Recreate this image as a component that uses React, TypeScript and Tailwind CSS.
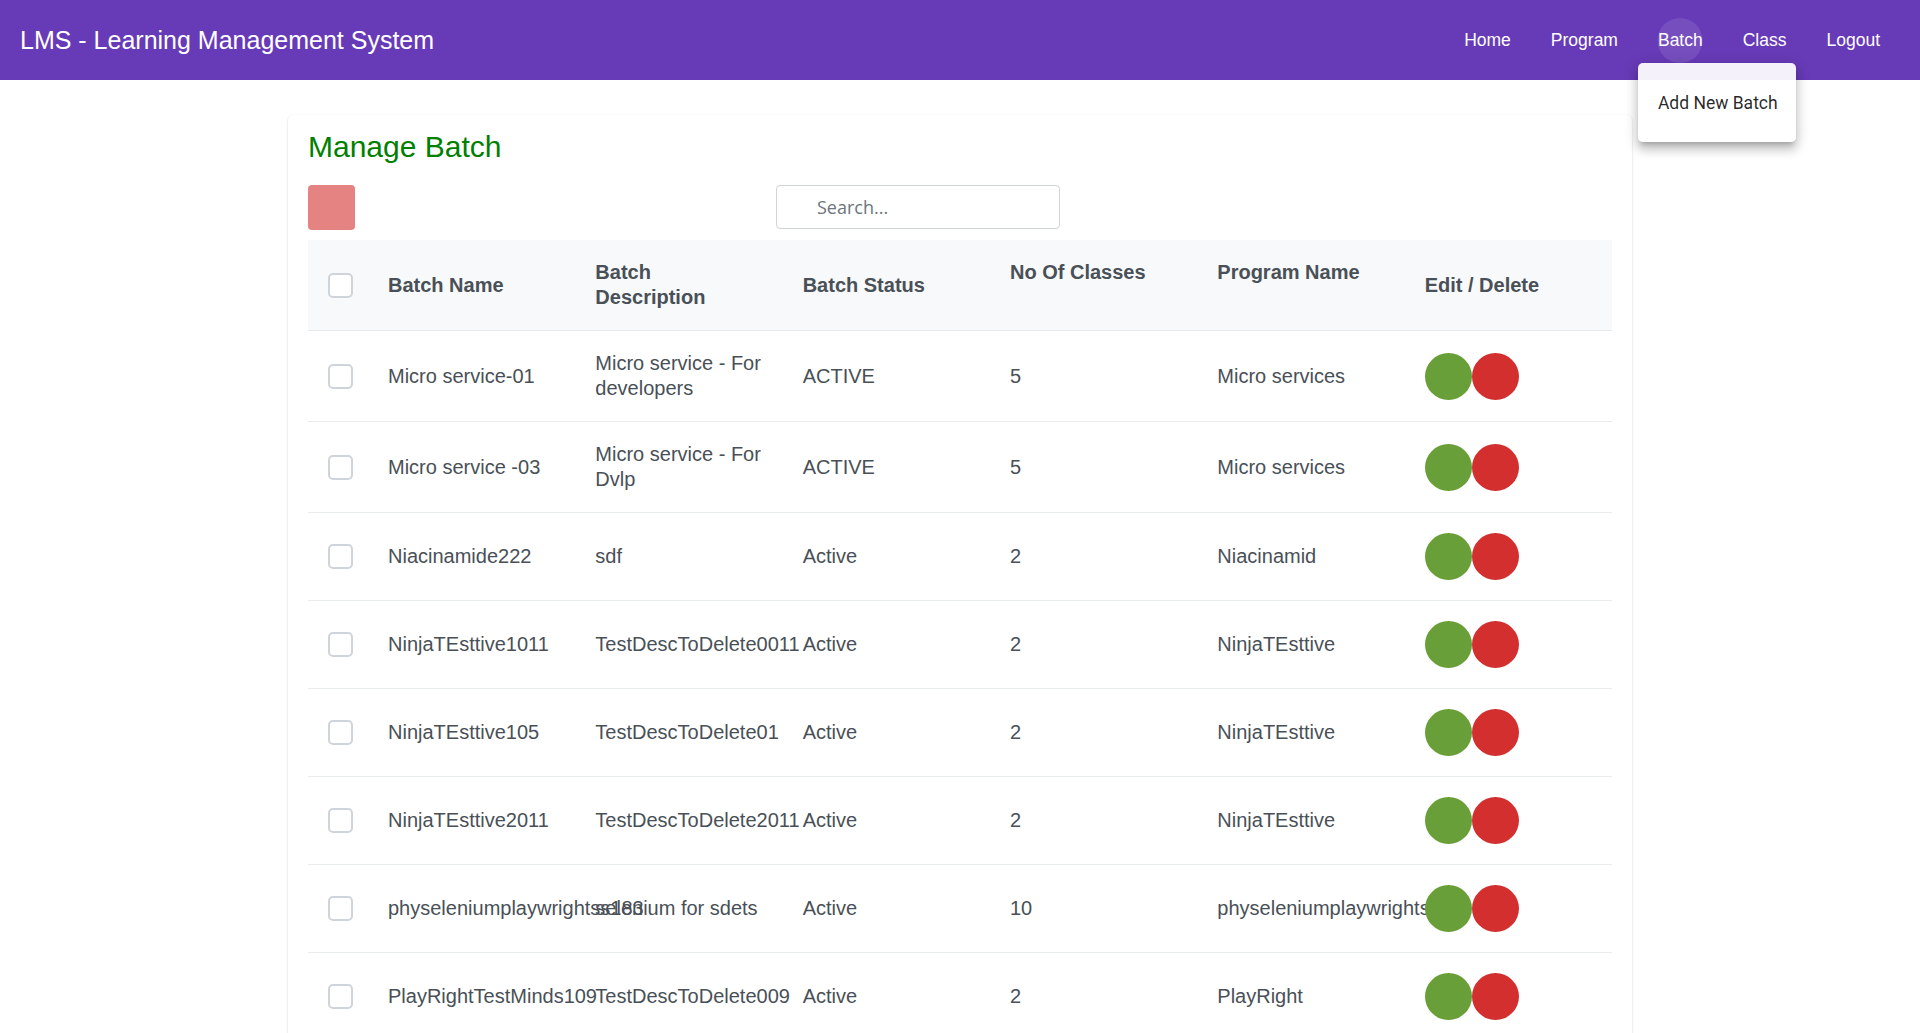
import React from 'react';

interface BatchRow {
  name: string;
  description: string;
  status: string;
  classes: number;
  program: string;
}

const batches: BatchRow[] = [
  { name: 'Micro service-01', description: 'Micro service - For developers', status: 'ACTIVE', classes: 5, program: 'Micro services' },
  { name: 'Micro service -03', description: 'Micro service - For Dvlp', status: 'ACTIVE', classes: 5, program: 'Micro services' },
  { name: 'Niacinamide222', description: 'sdf', status: 'Active', classes: 2, program: 'Niacinamid' },
  { name: 'NinjaTEsttive1011', description: 'TestDescToDelete0011', status: 'Active', classes: 2, program: 'NinjaTEsttive' },
  { name: 'NinjaTEsttive105', description: 'TestDescToDelete01', status: 'Active', classes: 2, program: 'NinjaTEsttive' },
  { name: 'NinjaTEsttive2011', description: 'TestDescToDelete2011', status: 'Active', classes: 2, program: 'NinjaTEsttive' },
  { name: 'physeleniumplaywrightss183', description: 'selenium for sdets', status: 'Active', classes: 10, program: 'physeleniumplaywrights' },
  { name: 'PlayRightTestMinds109', description: 'TestDescToDelete009', status: 'Active', classes: 2, program: 'PlayRight' },
];

const navItems = ['Home', 'Program', 'Batch', 'Class', 'Logout'];

const Checkbox: React.FC = () => (
  <div className="w-[25px] h-[25px] rounded-[5px] border-2 border-[#ced4da] bg-white" />
);

export default function App() {
  return (
    <div className="h-[1033px] overflow-hidden bg-white font-['Liberation_Sans',Arial,sans-serif]">
      {/* App bar */}
      <header className="h-[80px] bg-[#673ab7] flex items-center justify-between pl-5 pr-5 text-white">
        <h1 className="text-[25px] leading-none">LMS - Learning Management System</h1>
        <nav className="flex items-center">
          {navItems.map((item) => (
            <div key={item} className="relative h-[45px] px-5 flex items-center text-[17.5px]">
              {item === 'Batch' && (
                <span className="absolute left-1/2 top-0 -translate-x-1/2 w-[45px] h-[45px] rounded-full bg-white/10" />
              )}
              <span className="relative">{item}</span>
              {item === 'Batch' && (
                <div className="absolute left-0 top-full z-10 w-[158px] pt-[11px] pb-[9px] rounded-[5px] bg-white/[0.93] shadow-[0px_5px_5px_-3px_rgba(0,0,0,0.2),0px_8px_10px_1px_rgba(0,0,0,0.14),0px_3px_14px_2px_rgba(0,0,0,0.12)]">
                  <div className="h-[59px] px-5 flex items-center whitespace-nowrap font-['Roboto',sans-serif] text-[17.5px] text-black/85">
                    Add New Batch
                  </div>
                </div>
              )}
            </div>
          ))}
        </nav>
      </header>

      {/* Manage batch card */}
      <div className="w-[1344px] mx-auto mt-[35px] px-5 pt-[17px] pb-5 rounded-[5px] bg-white shadow-[0_2px_1px_-1px_rgba(0,0,0,0.2),0_1px_1px_0_rgba(0,0,0,0.14),0_1px_3px_0_rgba(0,0,0,0.12)]">
        <h2 className="text-[30px] leading-[30px] text-[#008000]">Manage Batch</h2>

        <div className="mt-[23px] h-[45px] flex items-start">
          <button className="w-[47px] h-[45px] rounded-[4px] bg-[#d32f2f] opacity-60" />
          <input
            placeholder="Search..."
            className="ml-[421px] w-[284px] h-[44px] rounded-[4px] border border-[#ced4da] pl-[40px] font-['Open_Sans',sans-serif] text-[18px] text-[#495057] placeholder:text-[#6c757d] outline-none"
          />
        </div>

        <table className="mt-[10px] w-full table-fixed border-collapse text-[20px] leading-[25px] text-[#495057]">
          <colgroup>
            <col className="w-[60px]" />
            <col />
            <col />
            <col />
            <col />
            <col />
            <col />
          </colgroup>
          <thead>
            <tr className="bg-[#f8f9fa] border-b border-[#e9ecef]">
              <th className="pl-5 py-5 align-middle">
                <Checkbox />
              </th>
              <th className="pl-5 pr-2 py-5 text-left font-bold align-middle">Batch Name</th>
              <th className="pl-5 pr-2 py-5 text-left font-bold align-middle">
                Batch
                <br />
                Description
              </th>
              <th className="pl-5 pr-2 py-5 text-left font-bold align-middle">Batch Status</th>
              <th className="pl-5 pr-2 py-5 text-left font-bold align-middle">
                No Of Classes
                <br />
                &nbsp;
              </th>
              <th className="pl-5 pr-2 py-5 text-left font-bold align-middle">
                Program Name
                <br />
                &nbsp;
              </th>
              <th className="pl-5 pr-2 py-5 text-left font-bold align-middle">Edit / Delete</th>
            </tr>
          </thead>
          <tbody>
            {batches.map((b) => (
              <tr key={b.name} className="border-b border-[#e9ecef]">
                <td className="pl-5 py-5 align-middle">
                  <Checkbox />
                </td>
                <td className="pl-5 pr-2 py-5 align-middle whitespace-nowrap overflow-visible">{b.name}</td>
                <td className="pl-5 pr-2 py-5 align-middle">{b.description}</td>
                <td className="pl-5 pr-2 py-5 align-middle">{b.status}</td>
                <td className="pl-5 pr-2 py-5 align-middle">{b.classes}</td>
                <td className="pl-5 pr-2 py-5 align-middle whitespace-nowrap overflow-visible">{b.program}</td>
                <td className="pl-5 pr-2 py-5 align-middle">
                  <div className="flex">
                    <button className="w-[47px] h-[47px] rounded-full bg-[#689f38]" />
                    <button className="w-[47px] h-[47px] rounded-full bg-[#d32f2f]" />
                  </div>
                </td>
              </tr>
            ))}
          </tbody>
        </table>
      </div>
    </div>
  );
}
